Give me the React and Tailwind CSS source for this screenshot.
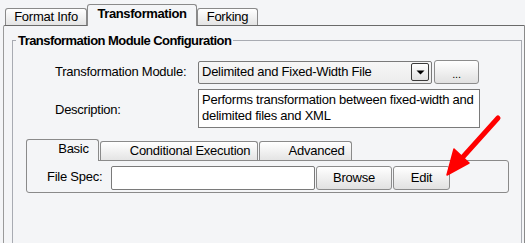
import React from 'react';

const btn = 'flex items-center justify-center border border-[#8c8c8c] rounded-[3px] bg-linear-to-b from-white to-[#e1e1e1] text-black';

function Tab({ label, active, w }) {
  return active ? (
    <div className={`relative z-10 h-[22px] ${w} flex items-center justify-center pb-[3px] border border-b-0 border-[#8a8a8a] rounded-t-[3px] bg-[#f4f5f7] font-bold tracking-[-0.4px]`}>
      {label}
    </div>
  ) : (
    <div className={`h-[17px] mb-px ${w} flex items-center justify-center border border-b-0 border-[#8a8a8a] rounded-t-[3px] bg-linear-to-b from-white to-[#e4e4e4]`}>
      {label}
    </div>
  );
}

function InnerTab({ label, active, w }) {
  return active ? (
    <div className={`relative z-10 h-[22px] ${w} flex items-center justify-center pl-[22px] pb-[3px] border border-b-0 border-[#8a8a8a] rounded-t-[3px] bg-[#f4f5f7]`}>
      {label}
    </div>
  ) : (
    <div className={`h-[19px] mb-px ${w} flex items-center justify-center pl-[22px] border border-b-0 border-[#8a8a8a] rounded-t-[3px] bg-linear-to-b from-white to-[#e4e4e4]`}>
      {label}
    </div>
  );
}

export default function App() {
  return (
    <div className="relative w-[525px] h-[243px] overflow-hidden bg-[#f4f5f7] pt-[4px] pl-[3px] text-[13px] tracking-[-0.25px] text-black font-['Liberation_Sans',Arial,sans-serif]">
      {/* main tabs */}
      <div className="flex items-end h-[22px] pl-[2px]">
        <Tab label="Format Info" w="w-[82px]" />
        <Tab label="Transformation" w="w-[110px]" active />
        <Tab label="Forking" w="w-[61px]" />
      </div>

      <div className="-mt-px h-[240px] border-t border-l border-r border-t-[#6a6a6a] border-l-[#9a9a9a] border-r-[#8a8a8a] rounded-tl-[2px] pl-[8px] pr-[2px]">
        <fieldset className="mt-[7px] h-[220px] border border-[#a8abb2]">
          <legend className="ml-[3px] px-[2px] font-bold leading-[15px] tracking-[-0.55px]">Transformation Module Configuration</legend>

          <div className="mt-[12px] flex items-center h-[24px] pl-[42px]">
            <span className="w-[143px]">Transformation Module:</span>
            <div className="w-[234px] h-[23px] flex items-center pl-[3px] pr-[2px] border border-[#7a7a7a] rounded-[2px] bg-linear-to-b from-[#f7f7f7] to-[#ececec]">
              <span className="flex-1">Delimited and Fixed-Width File</span>
              <div className="w-[18px] h-[18px] flex items-center justify-center border border-[#3a3a3a] rounded-[2px] bg-linear-to-b from-white to-[#e2e2e2]">
                <svg width="9" height="5" viewBox="0 0 9 5"><path d="M0.5 0.5h8L4.5 4.5z" fill="#000" /></svg>
              </div>
            </div>
            <div className={`${btn} ml-[2px] w-[45px] h-[24px] text-[11px] leading-none pt-[4px]`}>...</div>
          </div>

          <div className="mt-[5px] flex items-center pl-[42px]">
            <span className="w-[143px] pt-[2px]">Description:</span>
            <div className="w-[282px] h-[39px] border border-[#7a7a7a] bg-white pl-[3px] pt-[2px] leading-[16px]">
              Performs transformation between fixed-width and delimited files and XML
            </div>
          </div>

          {/* inner tabs */}
          <div className="mt-[11px] ml-[13px] flex items-end h-[22px] gap-[1px]">
            <InnerTab label="Basic" w="w-[73px]" active />
            <InnerTab label="Conditional Execution" w="w-[158px]" />
            <InnerTab label="Advanced" w="w-[93px]" />
          </div>
          <div className="-mt-px ml-[13px] w-[483px] h-[33px] border border-[#8a8a8a] rounded-b-[3px] rounded-tr-[3px] flex items-center pl-[20px] pt-[3px]">
            <span className="w-[64px] pb-[2px]">File Spec:</span>
            <div className="w-[204px] h-[24px] border border-[#7a7a7a] rounded-[2px] bg-white" />
            <div className={`${btn} ml-[1px] w-[76px] h-[24px]`}>Browse</div>
            <div className={`${btn} ml-[1px] w-[57px] h-[24px]`}>Edit</div>
          </div>
        </fieldset>
      </div>

      {/* red annotation arrow */}
      <svg className="absolute left-0 top-0 pointer-events-none" width="525" height="243" viewBox="0 0 525 243">
        <path d="M498 118 L462 158" stroke="#ff0000" strokeWidth="5" strokeLinecap="round" />
        <path d="M447 175 L454 149 L469 163 Z" fill="#ff0000" stroke="#ff0000" strokeWidth="1.5" strokeLinejoin="round" />
      </svg>
    </div>
  );
}
